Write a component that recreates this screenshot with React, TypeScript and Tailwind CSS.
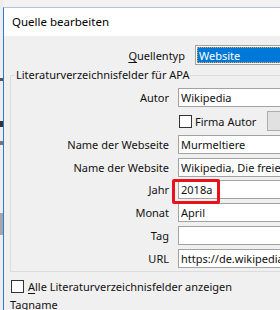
import React from 'react'

const font = { fontFamily: '"Noto Sans", "Open Sans", sans-serif' }

function Field({ label, value, className = '' }: { label: string; value?: string; className?: string }) {
  return (
    <div className={`flex items-center ${className}`}>
      <div className="w-[158px] shrink-0 text-right leading-none">{label}</div>
      <div className="ml-[9px] h-[19px] flex-1 min-w-0 bg-white border border-[#a2a2a2] border-r-0 flex items-center pl-[2px] whitespace-nowrap overflow-hidden leading-none">
        {value}
      </div>
    </div>
  )
}

export default function App() {
  return (
    <div className="w-[280px] h-[310px] overflow-hidden bg-[#f2f2f2] text-[11px] text-[#111]" style={font}>
      <div className="flex h-full pt-[7px]">
        {/* window behind the dialog */}
        <div className="w-[3px] shrink-0 flex flex-col -mt-[7px] bg-[#ededed]">
          <div className="h-[70px]" />
          <div className="h-[3px] bg-[#555] mt-[8px]" />
          <div className="h-[40px]" />
          <div className="h-[6px] bg-[#333]" />
          <div className="h-[14px]" />
          <div className="h-[4px] bg-[#777]" />
          <div className="h-[68px]" />
          <div className="h-[22px] bg-[#a7a7a7]" />
        </div>

        {/* dialog */}
        <div className="flex-1 min-w-0 flex flex-col border-l border-t border-[#2a7ad1] border-t-[#b8c4d2] bg-[#f0f0f0]">
          <div className="h-[30px] bg-white flex items-center pl-[8px] text-[11.5px] text-black">Quelle bearbeiten</div>

          <div className="pl-[6px]">
            {/* Quellentyp */}
            <div className="flex items-center mt-[9px]">
              <div className="w-[175px] shrink-0 text-right leading-none">
                <span className="underline underline-offset-2">Q</span>uellentyp
              </div>
              <div className="ml-[10px] h-[20px] flex-1 min-w-0 bg-white border border-[#a2a2a2] border-r-0 p-[1px] pr-0">
                <div className="h-full bg-[#0078d7] border border-dotted border-[#f0a040] border-r-0 text-white flex items-center pl-[1px] leading-none">
                  Website
                </div>
              </div>
            </div>

            {/* group box */}
            <fieldset className="mt-[3px] min-w-0 border border-[#dcdcdc] border-r-0 pb-[3px]">
              <legend className="ml-[4px] px-[1px] leading-[14px]">Literaturverzeichnisfelder für APA</legend>
              <Field label="Autor" value="Wikipedia" className="mt-[6px]" />
              <div className="flex items-center mt-[4px] h-[20px]">
                <div className="ml-[168px] shrink-0 w-[13px] h-[13px] bg-white border border-[#333]" />
                <span className="ml-[3px] leading-none whitespace-nowrap">Firma Autor</span>
                <div className="ml-auto w-[13px] shrink-0 h-[20px] bg-[#e1e1e1] border border-[#adadad] border-r-0" />
              </div>
              <Field label="Name der Webseite" value="Murmeltiere" className="mt-[4px]" />
              <Field label="Name der Website" value="Wikipedia, Die freie Enzyklopädie" className="mt-[4px]" />
              <div className="relative">
                <Field label="Jahr" value="2018a" className="mt-[3px]" />
                <div className="absolute left-[161px] -top-[1px] w-[48px] h-[25px] border-[3px] border-[#e8121a] rounded-[2px]" />
              </div>
              <Field label="Monat" value="April" className="mt-[4px]" />
              <Field label="Tag" value="" className="mt-[4px]" />
              <Field label="URL" value="https://de.wikipedia.org/wiki/Murmeltiere" className="mt-[4px]" />
            </fieldset>

            <div className="flex items-center mt-[8px]">
              <div className="ml-[1px] w-[13px] h-[13px] bg-white border border-[#333]" />
              <span className="ml-[4px] leading-none">
                <span className="underline underline-offset-2">A</span>lle Literaturverzeichnisfelder anzeigen
              </span>
            </div>
            <div className="mt-[6px] leading-none">Tagname</div>
          </div>
        </div>
      </div>
    </div>
  )
}
